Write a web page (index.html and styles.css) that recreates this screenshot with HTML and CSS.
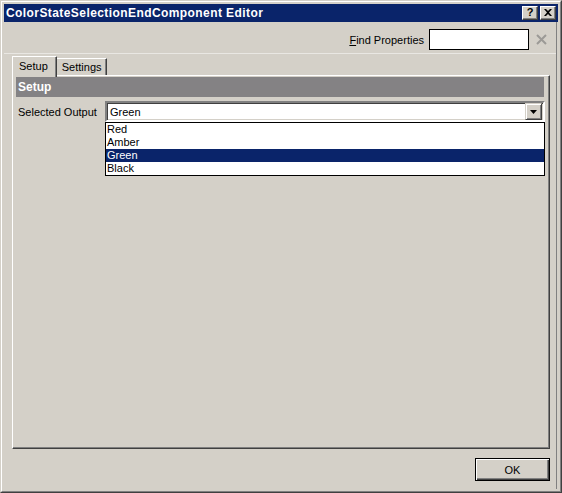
FILE: index.html
```html
<!DOCTYPE html>
<html>
<head>
<meta charset="utf-8">
<link rel="stylesheet" href="styles.css">
</head>
<body>
<div class="window">
  <div class="frame">
    <div class="titlebar">
      <span class="title">ColorStateSelectionEndComponent Editor</span>
      <div class="caption-buttons">
        <div class="cap-btn help">?</div>
        <div class="cap-btn close">
          <svg width="8" height="7" viewBox="0 0 8 7"><path d="M0 0h2l2 2 2-2h2L5 3.5 8 7H6L4 5 2 7H0l3-3.5z" fill="#000"/></svg>
        </div>
      </div>
    </div>
    <div class="client">
      <div class="find-row">
        <span class="find-label"><u>F</u>ind Properties</span>
        <div class="find-input"></div>
        <svg class="find-clear" width="11" height="11" viewBox="0 0 11 11"><path d="M1 1L10 10M10 1L1 10" stroke="#9c9a96" stroke-width="2"/></svg>
      </div>
      <div class="separator"></div>
      <div class="tabs">
        <div class="tab active">Setup</div>
        <div class="tab">Settings</div>
      </div>
      <div class="panel">
        <div class="section-head">Setup</div>
        <div class="field-row">
          <span class="field-label">Selected Output</span>
          <div class="combo">
            <div class="combo-box">
              <span class="combo-value">Green</span>
              <div class="combo-btn">
                <svg width="7" height="4" viewBox="0 0 7 4"><path d="M0 0h7L3.5 4z" fill="#000"/></svg>
              </div>
            </div>
            <div class="combo-list">
              <div class="item">Red</div>
              <div class="item">Amber</div>
              <div class="item selected">Green</div>
              <div class="item">Black</div>
            </div>
          </div>
        </div>
      </div>
      <div class="footer">
        <div class="ok-btn"><span>OK</span></div>
      </div>
    </div>
  </div>
</div>
</body>
</html>
```

FILE: styles.css
```css
html, body {
  margin: 0;
  padding: 0;
  background: #D4D0C8;
}
body {
  width: 562px;
  height: 493px;
  overflow: hidden;
  font-family: "Liberation Sans", Arial, sans-serif;
  font-size: 11px;
  color: #000;
}
.window {
  width: 562px;
  height: 493px;
  box-sizing: border-box;
  border: 1px solid;
  border-color: #D4D0C8 #404040 #404040 #D4D0C8;
  display: flex;
  flex-direction: column;
}
.frame {
  flex: 1;
  border: 1px solid;
  border-color: #fff #808080 #808080 #fff;
  padding: 2px;
  display: flex;
  flex-direction: column;
  min-height: 0;
}
.titlebar {
  height: 18px;
  background: #0A246A;
  display: flex;
  align-items: center;
  padding-left: 2px;
  flex-shrink: 0;
}
.title {
  color: #fff;
  font-weight: bold;
  font-size: 12px;
  letter-spacing: 0.42px;
}
.caption-buttons {
  margin-left: auto;
  display: flex;
  gap: 2px;
  padding-right: 2px;
}
.cap-btn {
  width: 16px;
  height: 14px;
  box-sizing: border-box;
  background: #D4D0C8;
  border: 1px solid;
  border-color: #fff #404040 #404040 #fff;
  box-shadow: inset -1px -1px 0 #808080;
  display: flex;
  align-items: center;
  justify-content: center;
  font-weight: bold;
  font-size: 11px;
  line-height: 1;
  padding-bottom: 1px;
}
.client {
  flex: 1;
  display: flex;
  flex-direction: column;
  border-right: 1px solid #808080;
  margin-right: 1px;
  min-height: 0;
}
.find-row {
  margin-top: 7px;
  height: 21px;
  display: flex;
  align-items: center;
  justify-content: flex-end;
  padding-right: 9px;
}
.find-input {
  width: 100px;
  height: 21px;
  box-sizing: border-box;
  border: 1px solid #000;
  background: #fff;
  margin-left: 5px;
}
.find-clear {
  margin-left: 7px;
}
.separator {
  margin-top: 3px;
  height: 1px;
  background: #E9E7E3;
}
.tabs {
  margin-top: 2px;
  margin-left: 8px;
  display: flex;
  align-items: flex-end;
  height: 19px;
  position: relative;
  z-index: 1;
}
.tab {
  height: 17px;
  box-sizing: border-box;
  padding: 2px 4px 0 5px;
  border-top: 1px solid #fff;
  border-right: 1px solid #404040;
  box-shadow: inset -1px 0 0 #808080;
  background: #D4D0C8;
}
.tab.active {
  height: 21px;
  margin-bottom: -2px;
  padding: 3px 8px 0 6px;
  border-left: 1px solid #fff;
  border-radius: 1px 1px 0 0;
}
.panel {
  margin-left: 8px;
  width: 538px;
  height: 374px;
  box-sizing: border-box;
  border: 1px solid;
  border-color: #fff #404040 #404040 #fff;
  box-shadow: inset -1px -1px 0 #808080;
  padding: 1px 5px 0 3px;
}
.section-head {
  height: 20px;
  background: #848284;
  color: #fff;
  font-weight: bold;
  font-size: 12px;
  display: flex;
  align-items: center;
  padding-left: 2px;
}
.field-row {
  margin-top: 4px;
  display: flex;
  align-items: center;
  padding-left: 2px;
}
.field-label {
  width: 87px;
  flex-shrink: 0;
}
.combo {
  position: relative;
}
.combo-box {
  width: 440px;
  height: 21px;
  box-sizing: border-box;
  border: 2px solid;
  border-color: #808080 #fff #fff #808080;
  box-shadow: inset 1px 1px 0 #404040, inset -1px -1px 0 #D4D0C8;
  background: #fff;
  display: flex;
  align-items: center;
  padding: 0 1px 0 3px;
}
.combo-value {
  flex: 1;
}
.combo-btn {
  width: 17px;
  height: 17px;
  box-sizing: border-box;
  background: #D4D0C8;
  border: 1px solid;
  border-color: #D4D0C8 #404040 #404040 #D4D0C8;
  box-shadow: inset 1px 1px 0 #fff, inset -1px -1px 0 #808080;
  display: flex;
  align-items: center;
  justify-content: center;
}
.combo-list {
  position: absolute;
  left: 0;
  top: 21px;
  width: 440px;
  box-sizing: border-box;
  border: 1px solid #000;
  background: #fff;
  z-index: 2;
}
.item {
  height: 13px;
  line-height: 13px;
  padding-left: 1px;
}
.item.selected {
  background: #0A246A;
  color: #fff;
}
.footer {
  display: flex;
  justify-content: flex-end;
  padding-top: 9px;
  padding-right: 6px;
}
.ok-btn {
  width: 75px;
  height: 23px;
  box-sizing: border-box;
  border: 1px solid #000;
  background: #D4D0C8;
  box-shadow: inset 1px 1px 0 #fff, inset -1px -1px 0 #404040, inset -2px -2px 0 #808080;
  display: flex;
  align-items: center;
  justify-content: center;
}
```
